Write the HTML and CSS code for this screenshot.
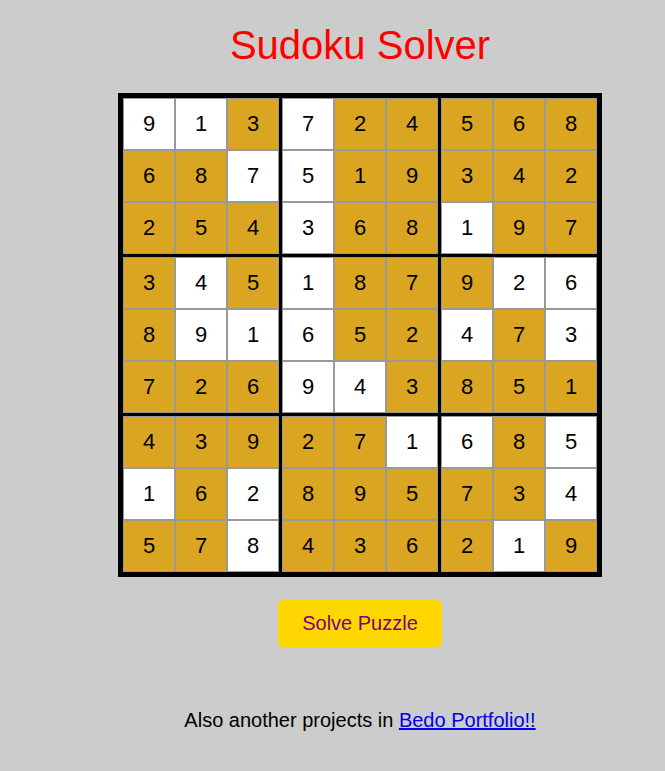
FILE: index.html
```html
<!DOCTYPE html>
<html lang="en">
<head>
<meta charset="utf-8">
<title>Sudoku Solver</title>
<link rel="stylesheet" href="styles.css">
</head>
<body>
<main class="page">
  <h1 class="title">Sudoku Solver</h1>
  <div class="board">
    <div class="block">
      <div class="cell">9</div><div class="cell">1</div><div class="cell gold">3</div>
      <div class="cell gold">6</div><div class="cell gold">8</div><div class="cell">7</div>
      <div class="cell gold">2</div><div class="cell gold">5</div><div class="cell gold">4</div>
    </div>
    <div class="block">
      <div class="cell">7</div><div class="cell gold">2</div><div class="cell gold">4</div>
      <div class="cell">5</div><div class="cell gold">1</div><div class="cell gold">9</div>
      <div class="cell">3</div><div class="cell gold">6</div><div class="cell gold">8</div>
    </div>
    <div class="block">
      <div class="cell gold">5</div><div class="cell gold">6</div><div class="cell gold">8</div>
      <div class="cell gold">3</div><div class="cell gold">4</div><div class="cell gold">2</div>
      <div class="cell">1</div><div class="cell gold">9</div><div class="cell gold">7</div>
    </div>
    <div class="block">
      <div class="cell gold">3</div><div class="cell">4</div><div class="cell gold">5</div>
      <div class="cell gold">8</div><div class="cell">9</div><div class="cell">1</div>
      <div class="cell gold">7</div><div class="cell gold">2</div><div class="cell gold">6</div>
    </div>
    <div class="block">
      <div class="cell">1</div><div class="cell gold">8</div><div class="cell gold">7</div>
      <div class="cell">6</div><div class="cell gold">5</div><div class="cell gold">2</div>
      <div class="cell">9</div><div class="cell">4</div><div class="cell gold">3</div>
    </div>
    <div class="block">
      <div class="cell gold">9</div><div class="cell">2</div><div class="cell">6</div>
      <div class="cell">4</div><div class="cell gold">7</div><div class="cell">3</div>
      <div class="cell gold">8</div><div class="cell gold">5</div><div class="cell gold">1</div>
    </div>
    <div class="block">
      <div class="cell gold">4</div><div class="cell gold">3</div><div class="cell gold">9</div>
      <div class="cell">1</div><div class="cell gold">6</div><div class="cell">2</div>
      <div class="cell gold">5</div><div class="cell gold">7</div><div class="cell">8</div>
    </div>
    <div class="block">
      <div class="cell gold">2</div><div class="cell gold">7</div><div class="cell">1</div>
      <div class="cell gold">8</div><div class="cell gold">9</div><div class="cell gold">5</div>
      <div class="cell gold">4</div><div class="cell gold">3</div><div class="cell gold">6</div>
    </div>
    <div class="block">
      <div class="cell">6</div><div class="cell gold">8</div><div class="cell">5</div>
      <div class="cell gold">7</div><div class="cell gold">3</div><div class="cell">4</div>
      <div class="cell gold">2</div><div class="cell">1</div><div class="cell gold">9</div>
    </div>
  </div>
  <button class="solve" type="button">Solve Puzzle</button>
  <p class="footer">Also another projects in <a href="#">Bedo Portfolio!!</a></p>
</main>
</body>
</html>
```
FILE: styles.css
```css
html, body {
  margin: 0;
  padding: 0;
  background: #cccccc;
}
body {
  font-family: "Liberation Sans", Arial, sans-serif;
  padding-top: 22px;
}
.page {
  width: 610px;
  margin-left: 55px;
  display: flex;
  flex-direction: column;
  align-items: center;
}
.title {
  margin: 0;
  font-size: 40px;
  line-height: 46px;
  font-weight: normal;
  color: #ff0000;
}
.board {
  margin-top: 25px;
  background: #000;
  border: 5px solid #000;
  display: grid;
  grid-template-columns: repeat(3, 156px);
  gap: 3px;
}
.block {
  display: grid;
  grid-template-columns: repeat(3, 52px);
}
.cell {
  width: 50px;
  height: 50px;
  border: 1px solid #999;
  background: #fff;
  color: #000;
  font-size: 22px;
  line-height: 50px;
  text-align: center;
}
.cell.gold {
  background: #daa520;
}
.solve {
  margin-top: 23px;
  width: 164px;
  height: 47px;
  border: none;
  border-radius: 5px;
  background: #ffd700;
  color: #800080;
  font-family: "Liberation Sans", Arial, sans-serif;
  font-size: 20px;
  padding: 0;
}
.footer {
  margin: 62px 0 0;
  font-size: 20px;
  line-height: 23px;
  color: #000;
}
.footer a {
  color: #0000ee;
}
```
